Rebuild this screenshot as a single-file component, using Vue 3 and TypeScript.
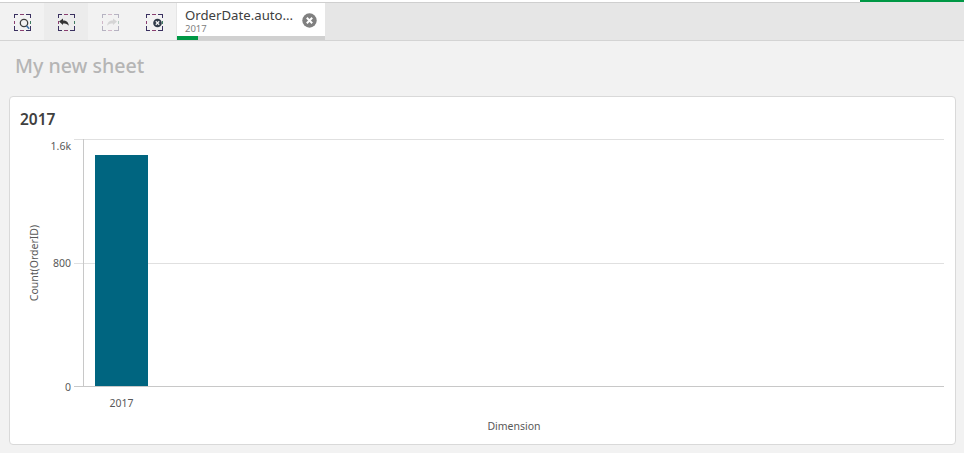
<script setup lang="ts">
const buttons = [
  { id: 'search', active: false, disabled: false },
  { id: 'back', active: true, disabled: false },
  { id: 'forward', active: false, disabled: true },
  { id: 'clear', active: false, disabled: false },
]
</script>

<template>
  <div class="page">
    <div class="topline"><div class="progress"></div></div>
    <div class="toolbar">
      <button v-for="b in buttons" :key="b.id" class="tool" :class="{ active: b.active, disabled: b.disabled }">
        <svg width="18" height="18" viewBox="0 0 18 18">
          <g fill="none" stroke-width="1" shape-rendering="crispEdges">
            <path d="M1.5 5V1.5H5" stroke="#3a3060" />
            <path d="M7 1.5H11" stroke="#8a3f70" />
            <path d="M13 1.5H17.5V5" stroke="#3a3060" />
            <path d="M17.5 7.5V11" stroke="#3f7a60" />
            <path d="M17.5 13V17.5H13" stroke="#3a3060" />
            <path d="M11 17.5H7" stroke="#8a3f70" />
            <path d="M5 17.5H1.5V13" stroke="#3a3060" />
            <path d="M1.5 11V7.5" stroke="#8a3f70" />
          </g>
          <g v-if="b.id === 'search'" fill="none" stroke="#404040" stroke-width="1.3">
            <circle cx="11" cy="10" r="3.7" />
            <path d="M13.5 12.8L16.2 15.8" stroke="#3a6ea5" stroke-width="1.6" />
          </g>
          <path v-if="b.id === 'back'" d="M2 8.5L6 5.5V7.4C9.5 7.4 11.5 9 11.8 12.8C10.6 11 8.8 10.5 6 10.5V12Z" fill="#333" />
          <path v-if="b.id === 'forward'" d="M16 8.5L12 5.5V7.4C8.5 7.4 6.5 9 6.2 12.8C7.4 11 9.2 10.5 12 10.5V12Z" fill="#9a9a9a" />
          <g v-if="b.id === 'clear'">
            <circle cx="12.5" cy="10" r="4.3" fill="#2f3a48" />
            <path d="M10.8 8.3L14.2 11.7M14.2 8.3L10.8 11.7" stroke="#f2f2f2" stroke-width="1.3" />
          </g>
        </svg>
      </button>
      <div class="tab">
        <div class="tab-text">
          <div class="tab-title">OrderDate.auto...</div>
          <div class="tab-sub">2017</div>
        </div>
        <svg class="tab-close" width="15" height="15" viewBox="0 0 15 15">
          <circle cx="7.5" cy="7.5" r="7.2" fill="#808080" />
          <path d="M4.8 4.8L10.2 10.2M10.2 4.8L4.8 10.2" stroke="#fff" stroke-width="2" />
        </svg>
        <div class="tab-bar"><div class="tab-bar-fill"></div></div>
      </div>
    </div>

    <div class="sheet-title">My new sheet</div>

    <div class="card">
      <div class="card-title">2017</div>
      <svg class="chart" width="945" height="312" viewBox="0 0 945 312">
        <g stroke="#e0e0e0" stroke-width="1" shape-rendering="crispEdges">
          <line x1="64" y1="0.5" x2="934" y2="0.5" />
          <line x1="64" y1="124.5" x2="934" y2="124.5" />
        </g>
        <g stroke="#c8c8c8" stroke-width="1" shape-rendering="crispEdges">
          <line x1="64" y1="247.5" x2="934" y2="247.5" />
          <line x1="73.5" y1="0" x2="73.5" y2="248" />
        </g>
        <rect x="85" y="16" width="53" height="231" fill="#006580" />
        <g class="lbl" text-anchor="end">
          <text x="61" y="11">1.6k</text>
          <text x="61" y="128">800</text>
          <text x="61" y="252">0</text>
        </g>
        <text class="lbl" x="111.5" y="268" text-anchor="middle">2017</text>
        <text class="lbl" x="504" y="291" text-anchor="middle">Dimension</text>
        <text class="lbl" transform="translate(27.5 124) rotate(-90)" text-anchor="middle">Count(OrderID)</text>
      </svg>
    </div>
  </div>
</template>

<style>
html, body { margin: 0; background: #f2f2f2; }
</style>

<style scoped>
.page {
  width: 964px;
  height: 453px;
  overflow: hidden;
  background: #f2f2f2;
  font-family: "Noto Sans", "Open Sans", sans-serif;
  display: flex;
  flex-direction: column;
}
.topline {
  height: 2px;
  background: #ffffff;
  border-bottom: 1px solid #cfcfcf;
  display: flex;
  justify-content: flex-end;
}
.progress {
  width: 104px;
  height: 2px;
  background: #009845;
  flex: none;
  box-shadow: 0 1px 0 #e6e6e6;
}
.toolbar {
  height: 37px;
  background: #e6e6e6;
  border-bottom: 1px solid #d4d4d4;
  display: flex;
}
.tool {
  width: 44px;
  height: 37px;
  padding: 10px 0 0;
  border: 0;
  background: #f2f2f2;
  display: flex;
  align-items: flex-start;
  justify-content: center;
  box-sizing: border-box;
}
.tool.active { background: #ececec; }
.tool.disabled svg { opacity: 0.32; }
.tab {
  margin-left: 1px;
  width: 148px;
  height: 37px;
  background: #ffffff;
  position: relative;
  display: flex;
  align-items: flex-start;
  box-sizing: border-box;
  padding: 4px 8px 0 8px;
  justify-content: space-between;
}
.tab-title {
  font-size: 13.2px;
  line-height: 16px;
  color: #404040;
  white-space: nowrap;
}
.tab-sub {
  font-size: 9.5px;
  line-height: 11px;
  color: #808080;
}
.tab-close { margin-top: 6px; }
.tab-bar {
  position: absolute;
  left: 0;
  right: 0;
  bottom: 0;
  height: 4px;
  background: #d0d0d0;
}
.tab-bar-fill {
  width: 21px;
  height: 4px;
  background: #009845;
}
.sheet-title {
  margin: 11px 0 0 15px;
  height: 32px;
  font-size: 19.6px;
  line-height: 28px;
  font-weight: 500;
  color: #b5b5b5;
}
.card {
  margin: 12px 0 0 9px;
  width: 947px;
  height: 349px;
  box-sizing: border-box;
  background: #ffffff;
  border: 1px solid #d9d9d9;
  border-radius: 4px;
}
.card-title {
  margin: 12px 0 0 10px;
  height: 30px;
  font-size: 15.5px;
  line-height: 20px;
  font-weight: 600;
  color: #404040;
}
.chart { display: block; }
.lbl text, text.lbl {
  font-family: "Noto Sans", "Open Sans", sans-serif;
  font-size: 10.5px;
  fill: #595959;
}
</style>
